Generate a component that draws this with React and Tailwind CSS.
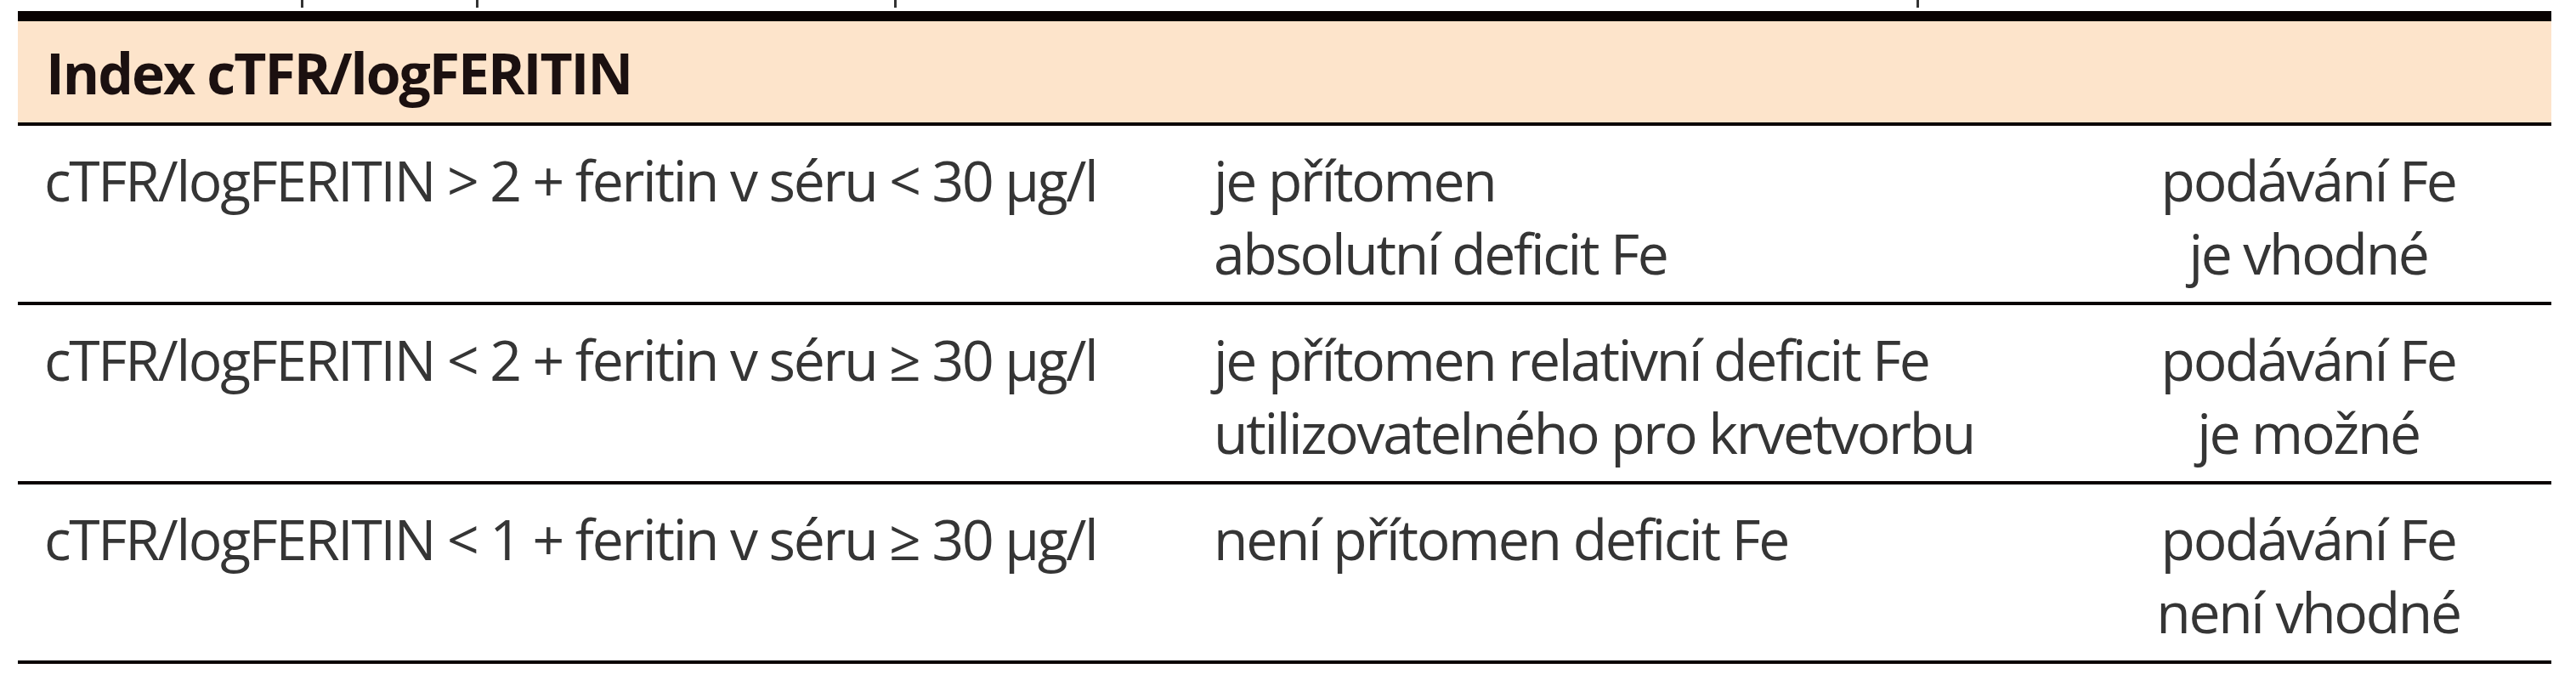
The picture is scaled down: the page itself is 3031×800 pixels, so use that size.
export default function App() {
  const rows = [
    {
      a: "cTFR/logFERITIN > 2 + feritin v séru < 30 µg/l",
      b: ["je přítomen", "absolutní deficit Fe"],
      c: ["podávání Fe", "je vhodné"],
    },
    {
      a: "cTFR/logFERITIN < 2 + feritin v séru ≥ 30 µg/l",
      b: ["je přítomen relativní deficit Fe", "utilizovatelného pro krvetvorbu"],
      c: ["podávání Fe", "je možné"],
    },
    {
      a: "cTFR/logFERITIN < 1 + feritin v séru ≥ 30 µg/l",
      b: ["není přítomen deficit Fe"],
      c: ["podávání Fe", "není vhodné"],
    },
  ];
  return (
    <div className="w-[3031px] h-[800px] bg-white font-['Open_Sans',sans-serif] text-[66px] leading-[86px] tracking-[-2.3px] text-[#353535]">
      <svg width="3031" height="13" className="block">
        <rect x="354" y="0" width="3" height="9" fill="#333" />
        <rect x="560" y="0" width="3" height="9" fill="#333" />
        <rect x="1052" y="0" width="3" height="9" fill="#333" />
        <rect x="2255" y="0" width="3" height="9" fill="#333" />
      </svg>
      <div className="ml-[21px] w-[2981px]">
        <div className="h-[135px] border-t-[12px] border-b-4 border-[#0a0303] bg-[#fde4cb] flex items-center pl-[33px]">
          <span className="font-bold text-[#1b1010] tracking-[-2px]">Index cTFR/logFERITIN</span>
        </div>
        {rows.map((r, i) => (
          <div key={i} className="h-[211px] border-b-4 border-[#0a0303] grid grid-cols-[1376px_1033px_572px] pt-[20px]">
            <div className="pl-[31px] whitespace-nowrap">{r.a}</div>
            <div className="pl-[31px] flex flex-col whitespace-nowrap">
              {r.b.map((t, j) => (
                <span key={j}>{t}</span>
              ))}
            </div>
            <div className="flex flex-col items-center whitespace-nowrap">
              {r.c.map((t, j) => (
                <span key={j}>{t}</span>
              ))}
            </div>
          </div>
        ))}
      </div>
    </div>
  );
}
